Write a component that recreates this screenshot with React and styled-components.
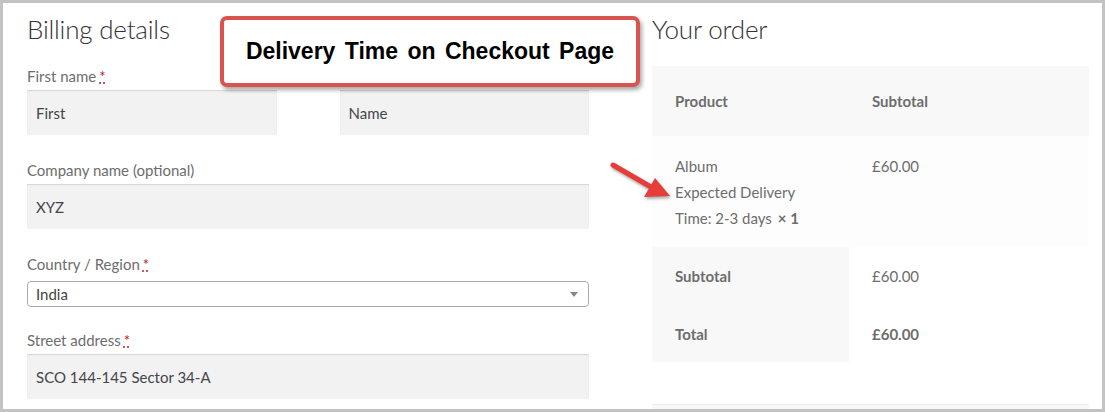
import React from 'react'
import styled, { createGlobalStyle } from 'styled-components'

const Global = createGlobalStyle`
  html, body { margin: 0; padding: 0; background: #fff; }
  body { font-family: Lato, "Open Sans", sans-serif; }
  * { box-sizing: border-box; }
`

const Frame = styled.div`
  position: relative;
  width: 1105px;
  height: 412px;
  border: 3px solid #c3c3c3;
  overflow: hidden;
  background: #fff;
  display: grid;
  grid-template-columns: 562px 437px;
  column-gap: 63px;
  padding: 11px 0 0 24px;
  align-items: start;
`

const Column = styled.div`
  display: flex;
  flex-direction: column;
`

const Heading = styled.h3`
  margin: 0 0 ${p => p.$mb || '0'} 0;
  font-size: 26px;
  font-weight: 300;
  line-height: 31px;
  color: #333;
  letter-spacing: -0.2px;
`

const Field = styled.div`
  display: flex;
  flex-direction: column;
  gap: ${p => p.$gap || '3px'};
  margin-bottom: ${p => p.$mb || '24px'};
`

const Label = styled.label`
  font-size: 15px;
  line-height: 22px;
  color: #6d6d6d;
  abbr {
    color: #b22222;
    text-decoration: underline dotted;
    margin-left: 3px;
    cursor: help;
  }
`

const Pair = styled.div`
  display: grid;
  grid-template-columns: 1fr 1fr;
  column-gap: 63px;
  margin-bottom: 24px;
  align-items: end;
`

const Input = styled.div`
  height: 45px;
  background: #f2f2f2;
  box-shadow: inset 0 1px 1px rgba(0, 0, 0, 0.12);
  padding: 0 9px;
  display: flex;
  align-items: center;
  font-size: 15px;
  color: #43454b;
`

const Select = styled.div`
  height: 26px;
  border: 1px solid #aaa;
  border-radius: 4px;
  background: #fff;
  padding: 0 8px;
  display: flex;
  align-items: center;
  justify-content: space-between;
  font-size: 15px;
  color: #444;
`

const Caret = styled.span`
  width: 0;
  height: 0;
  border-left: 4px solid transparent;
  border-right: 4px solid transparent;
  border-top: 5px solid #888;
  margin-right: 2px;
`

const Table = styled.div`
  margin-top: 21px;
  display: grid;
  grid-template-columns: 197px 240px;
  font-size: 15px;
  color: #6d6d6d;
`

const Cell = styled.div`
  padding: 0 23px;
  display: flex;
  align-items: ${p => p.$top ? 'flex-start' : 'center'};
  height: ${p => p.$h};
  background: ${p => p.$bg || '#fff'};
  font-weight: ${p => p.$bold ? 700 : 400};
  line-height: 26px;
  padding-top: ${p => p.$top ? '17px' : '0'};
`

const Qty = styled.strong`
  font-weight: 700;
  margin-left: 6px;
`

const PayBox = styled.div`
  margin-top: 42px;
  height: 60px;
  background: #f8f8f8;
  box-shadow: inset 0 1px 1px rgba(0, 0, 0, 0.05);
`

const Callout = styled.div`
  position: absolute;
  left: 217px;
  top: 13px;
  width: 420px;
  height: 71px;
  border: 4px solid #d9534f;
  border-radius: 7px;
  background: #fff;
  box-shadow: 2px 3px 4px rgba(0, 0, 0, 0.35);
  display: flex;
  align-items: center;
  justify-content: center;
  font-family: "Liberation Sans", Arial, sans-serif;
  font-weight: 700;
  font-size: 23px;
  color: #000;
  word-spacing: 3px;
`

const Arrow = styled.svg`
  position: absolute;
  left: 604px;
  top: 154px;
  filter: drop-shadow(1px 2px 1.5px rgba(0, 0, 0, 0.35));
`

export default function App() {
  return (
    <>
      <Global />
      <Frame>
        <Column>
          <Heading $mb="20px">Billing details</Heading>
          <Pair>
            <Field $mb="0">
              <Label>First name<abbr title="required">*</abbr></Label>
              <Input>First</Input>
            </Field>
            <Field $mb="0">
              <Input>Name</Input>
            </Field>
          </Pair>
          <Field>
            <Label>Company name (optional)</Label>
            <Input>XYZ</Input>
          </Field>
          <Field $gap="6px" $mb="22px">
            <Label>Country / Region<abbr title="required">*</abbr></Label>
            <Select>India<Caret /></Select>
          </Field>
          <Field>
            <Label>Street address<abbr title="required">*</abbr></Label>
            <Input>SCO 144-145 Sector 34-A</Input>
          </Field>
        </Column>
        <Column>
          <Heading>Your order</Heading>
          <Table>
            <Cell $h="70px" $bg="#f8f8f8" $bold>Product</Cell>
            <Cell $h="70px" $bg="#f8f8f8" $bold>Subtotal</Cell>
            <Cell $h="111px" $bg="#fdfdfd" $top>
              <div>
                Album<br />Expected Delivery<br />Time: 2-3 days<Qty>× 1</Qty>
              </div>
            </Cell>
            <Cell $h="111px" $bg="#fdfdfd" $top>£60.00</Cell>
            <Cell $h="58px" $bg="#f8f8f8" $bold>Subtotal</Cell>
            <Cell $h="58px">£60.00</Cell>
            <Cell $h="57px" $bg="#f8f8f8" $bold>Total</Cell>
            <Cell $h="57px" $bold>£60.00</Cell>
          </Table>
          <PayBox />
        </Column>
        <Callout>Delivery Time on Checkout Page</Callout>
        <Arrow width="70" height="48" viewBox="0 0 70 48">
          <path d="M6 8 L44 30" stroke="#e63d3a" strokeWidth="5" strokeLinecap="round" />
          <polygon points="63,39 37,40 48,21" fill="#e63d3a" />
        </Arrow>
      </Frame>
    </>
  )
}
